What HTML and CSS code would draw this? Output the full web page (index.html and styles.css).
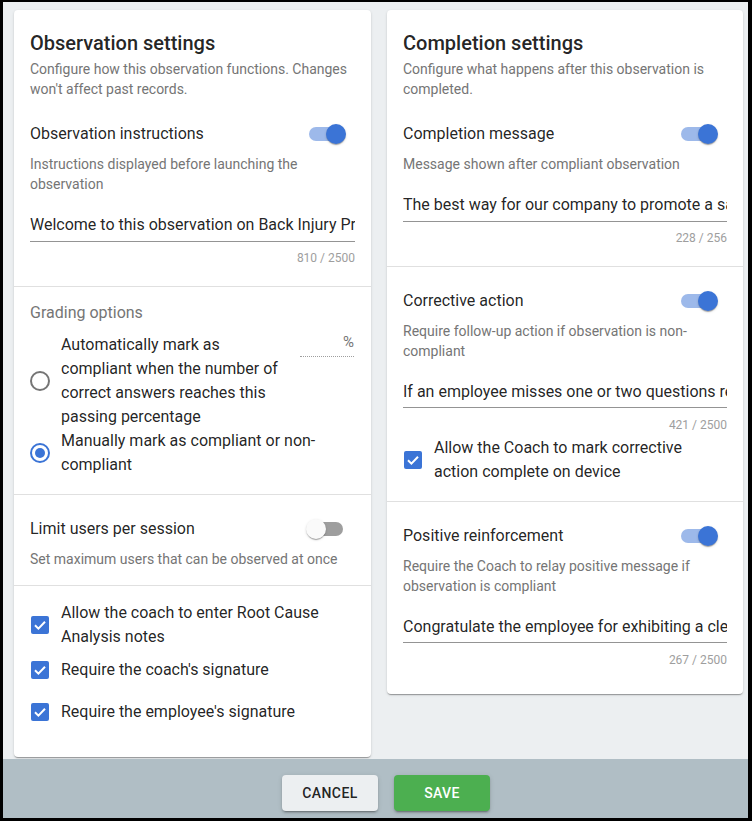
FILE: index.html
```html
<!DOCTYPE html>
<html lang="en">
<head>
<meta charset="utf-8">
<title>Observation settings</title>
<link rel="stylesheet" href="styles.css">
</head>
<body>
<div class="frame">
  <main class="main">
    <section class="card card--left">
      <header class="card-head">
        <h2 class="card-title">Observation settings</h2>
        <p class="card-sub">Configure how this observation functions. Changes won't affect past records.</p>
      </header>

      <div class="section sec-first">
        <div class="row">
          <span class="label">Observation instructions</span>
          <span class="switch on"><span class="track"></span><span class="thumb"></span></span>
        </div>
        <p class="desc">Instructions displayed before launching the observation</p>
        <input class="field" type="text" value="Welcome to this observation on Back Injury Prevention. Please read each question carefully.">
        <div class="counter">810 / 2500</div>
      </div>

      <div class="section sec-grading">
        <div class="group-label">Grading options</div>
        <div class="option">
          <svg class="radio" viewBox="0 0 20 20" width="20" height="20"><circle cx="10" cy="10" r="9" fill="none" stroke="#757575" stroke-width="2"/></svg>
          <span class="option-text narrow">Automatically mark as compliant when the number of correct answers reaches this passing percentage</span>
          <span class="percent">%</span>
        </div>
        <div class="option">
          <svg class="radio" viewBox="0 0 20 20" width="20" height="20"><circle cx="10" cy="10" r="9" fill="none" stroke="#3b74d6" stroke-width="2"/><circle cx="10" cy="10" r="5" fill="#3b74d6"/></svg>
          <span class="option-text">Manually mark as compliant or non-compliant</span>
        </div>
      </div>

      <div class="section sec-limit">
        <div class="row">
          <span class="label">Limit users per session</span>
          <span class="switch"><span class="track"></span><span class="thumb"></span></span>
        </div>
        <p class="desc">Set maximum users that can be observed at once</p>
      </div>

      <div class="section sec-checks">
        <div class="option">
          <svg class="check" viewBox="0 0 18 18" width="18" height="18"><rect width="18" height="18" rx="2" fill="#3b74d6"/><polyline points="4,9.3 7.4,12.6 14,5.8" fill="none" stroke="#fff" stroke-width="2"/></svg>
          <span class="option-text">Allow the coach to enter Root Cause Analysis notes</span>
        </div>
        <div class="option">
          <svg class="check" viewBox="0 0 18 18" width="18" height="18"><rect width="18" height="18" rx="2" fill="#3b74d6"/><polyline points="4,9.3 7.4,12.6 14,5.8" fill="none" stroke="#fff" stroke-width="2"/></svg>
          <span class="option-text">Require the coach's signature</span>
        </div>
        <div class="option">
          <svg class="check" viewBox="0 0 18 18" width="18" height="18"><rect width="18" height="18" rx="2" fill="#3b74d6"/><polyline points="4,9.3 7.4,12.6 14,5.8" fill="none" stroke="#fff" stroke-width="2"/></svg>
          <span class="option-text">Require the employee's signature</span>
        </div>
      </div>
    </section>

    <section class="card card--right">
      <header class="card-head">
        <h2 class="card-title">Completion settings</h2>
        <p class="card-sub">Configure what happens after this observation is completed.</p>
      </header>

      <div class="section sec-first sec-r1">
        <div class="row">
          <span class="label">Completion message</span>
          <span class="switch on"><span class="track"></span><span class="thumb"></span></span>
        </div>
        <p class="desc">Message shown after compliant observation</p>
        <input class="field" type="text" value="The best way for our company to promote a safe workplace is by practicing safe habits.">
        <div class="counter">228 / 256</div>
      </div>

      <div class="section sec-r2">
        <div class="row">
          <span class="label">Corrective action</span>
          <span class="switch on"><span class="track"></span><span class="thumb"></span></span>
        </div>
        <p class="desc">Require follow-up action if observation is non-compliant</p>
        <input class="field" type="text" value="If an employee misses one or two questions review the procedure with them.">
        <div class="counter counter--tight">421 / 2500</div>
        <div class="option">
          <svg class="check" viewBox="0 0 18 18" width="18" height="18"><rect width="18" height="18" rx="2" fill="#3b74d6"/><polyline points="4,9.3 7.4,12.6 14,5.8" fill="none" stroke="#fff" stroke-width="2"/></svg>
          <span class="option-text">Allow the Coach to mark corrective action complete on device</span>
        </div>
      </div>

      <div class="section sec-r3">
        <div class="row">
          <span class="label">Positive reinforcement</span>
          <span class="switch on"><span class="track"></span><span class="thumb"></span></span>
        </div>
        <p class="desc">Require the Coach to relay positive message if observation is compliant</p>
        <input class="field" type="text" value="Congratulate the employee for exhibiting a clear understanding of safe lifting.">
        <div class="counter">267 / 2500</div>
      </div>
    </section>
  </main>

  <footer class="footer">
    <button class="btn btn-cancel" type="button">Cancel</button>
    <button class="btn btn-save" type="button">Save</button>
  </footer>
</div>
</body>
</html>
```

FILE: styles.css
```css
* { box-sizing: border-box; }

html, body {
  margin: 0;
  padding: 0;
  background: #000;
}

body {
  font-family: Roboto, "Liberation Sans", Arial, sans-serif;
  color: rgba(0, 0, 0, 0.87);
}

.frame {
  width: 752px;
  height: 821px;
  border-style: solid;
  border-color: #000;
  border-width: 2px 4px 3px 3px;
  display: flex;
  flex-direction: column;
  background: #eceff1;
  overflow: hidden;
}

.main {
  flex: 1;
  min-height: 0;
  overflow: hidden;
  display: grid;
  grid-template-columns: 357px 356px;
  column-gap: 16px;
  align-items: start;
  padding: 8px 0 0 11px;
}

.card {
  background: #fff;
  border-radius: 4px;
  box-shadow: 0 2px 1px -1px rgba(0,0,0,0.2), 0 1px 1px 0 rgba(0,0,0,0.14), 0 1px 3px 0 rgba(0,0,0,0.12);
  padding-top: 18px;
}

.card-head {
  padding: 0 16px;
}

.card-title {
  margin: 0;
  font-size: 20px;
  font-weight: 500;
  line-height: 31px;
  color: rgba(0, 0, 0, 0.87);
}

.card-sub {
  margin: 0;
  font-size: 14px;
  line-height: 20px;
  color: #757575;
}

.section {
  padding: 22px 16px 20px;
  border-top: 1px solid #e0e0e0;
}

.section.sec-first {
  border-top: 0;
  padding-top: 23px;
}

.sec-r1 { padding-bottom: 19.5px; }
.sec-r2 { padding-bottom: 16.5px; }
.sec-r3 { padding-bottom: 26px; }
.sec-grading { padding-top: 14px; padding-bottom: 16.5px; }
.sec-limit { padding-top: 22px; padding-bottom: 16px; }
.sec-checks { padding-top: 15px; padding-bottom: 24.5px; }

.row {
  height: 24px;
  display: flex;
  align-items: center;
  justify-content: space-between;
}

.label {
  font-size: 16px;
  line-height: 24px;
}

.switch {
  position: relative;
  width: 40px;
  height: 20px;
  margin-right: 9px;
  flex: none;
}

.switch .track {
  position: absolute;
  left: 3px;
  top: 3px;
  width: 34px;
  height: 14px;
  border-radius: 7px;
  background: #000;
  opacity: 0.38;
}

.switch .thumb {
  position: absolute;
  left: 0;
  top: 0;
  width: 20px;
  height: 20px;
  border-radius: 50%;
  background: #fafafa;
  box-shadow: 0 2px 1px -1px rgba(0,0,0,0.2), 0 1px 1px 0 rgba(0,0,0,0.14), 0 1px 3px 0 rgba(0,0,0,0.12);
}

.switch.on .track {
  background: #3b74d6;
  opacity: 0.5;
}

.switch.on .thumb {
  left: 20px;
  background: #3b74d6;
}

.desc {
  margin: 8px 0 0;
  font-size: 14px;
  line-height: 20px;
  color: #757575;
}

.field {
  display: block;
  width: 100%;
  height: 33px;
  margin: 14.5px 0 0;
  padding: 0;
  border: 0;
  border-bottom: 1px solid #949494;
  border-radius: 0;
  outline: none;
  background: transparent;
  font-family: Roboto, "Liberation Sans", Arial, sans-serif;
  font-size: 16px;
  line-height: 32px;
  color: rgba(0, 0, 0, 0.87);
}

.counter {
  margin-top: 8.5px;
  font-size: 12px;
  line-height: 16px;
  text-align: right;
  color: #9e9e9e;
}

.counter--tight {
  margin-bottom: 3.5px;
}

.group-label {
  font-size: 16px;
  line-height: 24px;
  color: #757575;
  margin-bottom: 8px;
}

.option {
  display: flex;
  align-items: center;
  min-height: 42px;
}

.radio {
  flex: none;
  margin-right: 11px;
}

.check {
  flex: none;
  margin: 0 12px 0 1px;
}

.option-text {
  flex: 1;
  font-size: 16px;
  line-height: 24px;
}

.option-text.narrow {
  flex: 0 0 225px;
}

.percent {
  align-self: flex-start;
  flex: none;
  width: 54px;
  height: 24px;
  margin-left: 14px;
  border-bottom: 1px dotted #9e9e9e;
  text-align: right;
  font-size: 15px;
  line-height: 18px;
  color: #757575;
}

.footer {
  flex: none;
  height: 59px;
  background: #b0bec5;
  display: flex;
  justify-content: center;
  align-items: flex-start;
  gap: 16px;
  padding: 16px 0 0 21px;
}

.btn {
  width: 96px;
  height: 36px;
  border: 0;
  border-radius: 4px;
  font-family: Roboto, "Liberation Sans", Arial, sans-serif;
  font-size: 14px;
  font-weight: 500;
  letter-spacing: 0.02857em;
  text-transform: uppercase;
  box-shadow: 0 3px 1px -2px rgba(0,0,0,0.2), 0 2px 2px 0 rgba(0,0,0,0.14), 0 1px 5px 0 rgba(0,0,0,0.12);
  cursor: pointer;
}

.btn-cancel {
  background: #eceff1;
  color: rgba(0, 0, 0, 0.87);
}

.btn-save {
  background: #4caf50;
  color: #fff;
}
```
